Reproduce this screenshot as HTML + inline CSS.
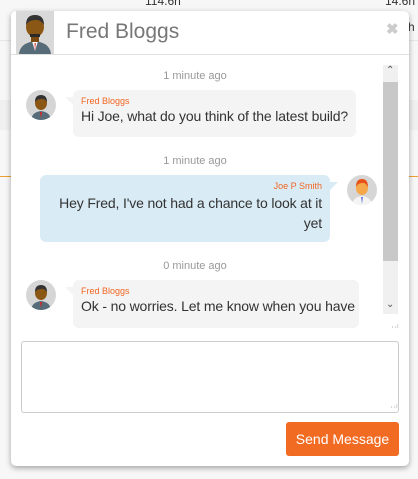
<!DOCTYPE html>
<html><head><style>
*{box-sizing:border-box;margin:0;padding:0}
body{width:418px;height:479px;overflow:hidden;background:#f7f7f7;font-family:"Liberation Sans",sans-serif;position:relative}
.abs{position:absolute}
.bgtext{font-size:12px;color:#333;top:-6px}
.panel{left:11px;top:11px;width:398px;height:455px;background:#fff;border-radius:5px;box-shadow:0 2px 6px rgba(0,0,0,.35)}
.ts{font-size:11px;color:#999;width:100%;text-align:center}
.bub{border-radius:6px;font-size:14px;letter-spacing:-0.15px;color:#333;white-space:nowrap}
.name{font-size:9px;color:#f26522;letter-spacing:0}
.av{width:30px;height:30px;border-radius:50%;background:#d6d6d6;overflow:hidden}
</style></head><body>
<div class="abs bgtext" style="left:145px">114.6h</div>
<div class="abs bgtext" style="left:385px">14.6h</div>
<div class="abs" style="left:0;top:40px;width:418px;height:1px;background:#e6e6e6"></div>
<div class="abs" style="left:0;top:100px;width:418px;height:30px;background:#f0f0f0"></div>
<div class="abs" style="left:0;top:176px;width:418px;height:1px;background:#f0a030"></div>
<div class="abs" style="left:408px;top:20px;font-size:12px;color:#333">h</div>

<div class="abs panel">
 <div class="abs" style="left:5px;top:0;width:38px;height:43px;background:#d9d9d9;overflow:hidden">
  <svg width="38" height="43" viewBox="0 0 38 43"><path d="M3 43 Q4 32 19 30 Q34 32 35 43Z" fill="#566c78"/><path d="M16 30 L19 40 L22 30Z" fill="#fff"/><path d="M18.5 32 L19 40 L19.8 32Z" fill="#d22"/><rect x="15" y="24" width="8" height="7" fill="#7a4a10"/><ellipse cx="19" cy="16" rx="9" ry="10" fill="#8b5714"/><path d="M10 14 Q10 4 19 4 Q28 4 28 14 Q24 8 19 9 Q13 9 10 14Z" fill="#333"/><rect x="14" y="23" width="10" height="3" fill="#2a2a2a"/></svg>
 </div>
 <div class="abs" style="left:55px;top:9px;font-size:21px;color:#777">Fred Bloggs</div>
 <div class="abs" style="left:375px;top:9px;font-size:15px;color:#ccc;font-weight:bold">✖</div>
 <div class="abs" style="left:0;top:43px;width:398px;height:1px;background:#e0e0e0"></div>

 <div class="abs" style="left:372px;top:54px;width:15px;height:249px;background:#f0f0f0"></div>
 <div class="abs" style="left:372px;top:71px;width:15px;height:179px;background:#c8c8c8"></div>
 <div class="abs" style="left:375px;top:54px;font-size:10px;color:#555">⌃</div>
 <div class="abs" style="left:375px;top:288px;font-size:10px;color:#555">⌄</div>

 <div class="abs ts" style="left:-15px;top:59px">1 minute ago</div>
 <div class="abs av" style="left:15px;top:79px"><svg width="30" height="30" viewBox="0 0 30 30"><path d="M5 30 Q6 22 15 21 Q24 22 25 30Z" fill="#566c78"/><path d="M14 22 L15 28 L16 22Z" fill="#d22"/><ellipse cx="15" cy="13" rx="6" ry="7" fill="#8b5714"/><path d="M9 12 Q9 5 15 5 Q21 5 21 12 Q18 8 15 9 Q11 9 9 12Z" fill="#333"/></svg></div>
 <div class="abs bub" style="left:62px;top:79px;width:283px;height:47px;background:#f4f4f4;padding:6px 8px">
  <div class="name">Fred Bloggs</div><div style="margin-top:2px">Hi Joe, what do you think of the latest build?</div></div>
 <div class="abs" style="left:54px;top:86px;width:0;height:0;border-top:8px solid #f4f4f4;border-left:8px solid transparent"></div>

 <div class="abs ts" style="left:-15px;top:144px">1 minute ago</div>
 <div class="abs av" style="left:336px;top:164px"><svg width="30" height="30" viewBox="0 0 30 30"><path d="M5 30 Q6 22 15 21 Q24 22 25 30Z" fill="#f4f4f4"/><path d="M14.3 22 L15 29 L15.7 22Z" fill="#34c"/><ellipse cx="15" cy="13" rx="6" ry="7" fill="#f5a84a"/><path d="M9 12 Q9 4 15 4 Q21 4 21 12 Q18 7 15 8 Q11 8 9 12Z" fill="#e8501a"/></svg></div>
 <div class="abs bub" style="left:29px;top:164px;width:290px;height:67px;background:#d9ebf5;padding:6px 8px;text-align:right;line-height:20px">
  <div class="name" style="line-height:11px">Joe P Smith</div><div style="margin-top:1px">Hey Fred, I've not had a chance to look at it<br>yet</div></div>
 <div class="abs" style="left:319px;top:171px;width:0;height:0;border-top:8px solid #d9ebf5;border-right:8px solid transparent"></div>

 <div class="abs ts" style="left:-15px;top:249px">0 minute ago</div>
 <div class="abs av" style="left:15px;top:269px"><svg width="30" height="30" viewBox="0 0 30 30"><path d="M5 30 Q6 22 15 21 Q24 22 25 30Z" fill="#566c78"/><path d="M14 22 L15 28 L16 22Z" fill="#d22"/><ellipse cx="15" cy="13" rx="6" ry="7" fill="#8b5714"/><path d="M9 12 Q9 5 15 5 Q21 5 21 12 Q18 8 15 9 Q11 9 9 12Z" fill="#333"/></svg></div>
 <div class="abs bub" style="left:62px;top:269px;width:286px;height:48px;background:#f4f4f4;padding:6px 8px">
  <div class="name">Fred Bloggs</div><div style="margin-top:2px">Ok - no worries. Let me know when you have</div></div>
 <div class="abs" style="left:54px;top:276px;width:0;height:0;border-top:8px solid #f4f4f4;border-left:8px solid transparent"></div>
 <div class="abs" style="left:378px;top:311px;font-size:7px;color:#aaa">⠠⠴</div>

 <div class="abs" style="left:10px;top:330px;width:378px;height:72px;border:1px solid #ccc;border-radius:3px"></div>
 <div class="abs" style="left:377px;top:391px;font-size:7px;color:#aaa">⠠⠴</div>
 <div class="abs" style="left:275px;top:411px;width:113px;height:34px;background:#f26b22;border-radius:3px;color:#fff;font-size:14px;text-align:center;line-height:34px">Send Message</div>
</div>
</body></html>
